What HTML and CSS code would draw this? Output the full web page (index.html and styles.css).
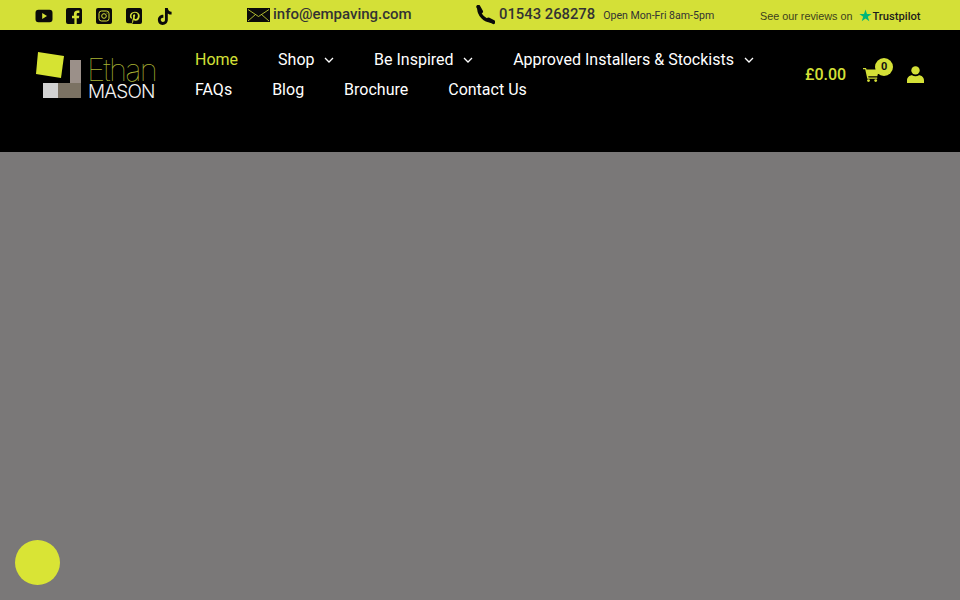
FILE: index.html
```html
<!DOCTYPE html>
<html lang="en">
<head>
    <meta charset="UTF-8">
    <meta name="viewport" content="width=device-width, initial-scale=1.0">
    <title>Ethan Mason</title>
    <link rel="stylesheet" href="styles.css">
</head>
<body>
    <div class="topbar">
        <div class="socials">
            <a href="#" aria-label="YouTube">
                <svg viewBox="0 0 18 18" width="18" height="18"><path fill="#0a0a0a" d="M3.5 2.8h11A3 3 0 0 1 17.500 5.800v6.400a3 3 0 0 1-3 3h-11a3 3 0 0 1-3-3V5.800a3 3 0 0 1 3-3z"/><path fill="#d4e037" d="M7.200 6.100v5.800l4.800-2.900z"/></svg>
            </a>
            <a href="#" aria-label="Facebook">
                <svg viewBox="0 0 16 16" width="16" height="16"><path fill="#0a0a0a" d="M2 0h12a2 2 0 0 1 2 2v12a2 2 0 0 1-2 2h-3.300v-5.700h2.200l.4-2.600h-2.600V6.200c0-.8.4-1.300 1.400-1.300h1.300V2.600c-.6-.1-1.300-.2-2-.2-2.200 0-3.500 1.300-3.500 3.500v1.800H6v2.600h2.400V16H2a2 2 0 0 1-2-2V2a2 2 0 0 1 2-2z"/></svg>
            </a>
            <a href="#" aria-label="Instagram">
                <svg viewBox="0 0 16 16" width="16" height="16"><rect width="16" height="16" rx="2" fill="#0a0a0a"/><rect x="3" y="3" width="10" height="10" rx="2.500" fill="none" stroke="#d4e037" stroke-width="1"/><circle cx="8" cy="8" r="2.300" fill="none" stroke="#d4e037" stroke-width="1"/><circle cx="11" cy="5" r=".6" fill="#d4e037"/></svg>
            </a>
            <a href="#" aria-label="Pinterest">
                <svg viewBox="0 0 16 16" width="16" height="16"><path fill="#0a0a0a" d="M2 0h12a2 2 0 0 1 2 2v12a2 2 0 0 1-2 2H6.200c.4-.7.800-1.500 1-2.300l.5-1.900c.3.500 1 1 1.900 1 2.500 0 4.100-2.200 4.100-4.800 0-2.400-2-4.200-4.800-4.200-3.300 0-5 2.200-5 4.300 0 1.200.5 2.300 1.500 2.700.2.100.3 0 .4-.2l.2-.7c0-.2 0-.3-.1-.4-.3-.4-.5-.9-.5-1.500 0-1.900 1.400-3.300 3.500-3.300 1.900 0 3 1.200 3 2.700 0 2-.9 3.600-2.200 3.600-.7 0-1.300-.6-1.100-1.300.2-.9.600-1.800.6-2.400 0-.6-.3-1-.9-1-.7 0-1.300.7-1.300 1.700 0 .6.200 1.100.2 1.100l-.9 3.600c-.2.800-.1 1.700 0 2.500H2a2 2 0 0 1-2-2V2a2 2 0 0 1 2-2z"/></svg>
            </a>
            <a href="#" aria-label="TikTok">
                <svg viewBox="0 0 18 18" width="17" height="17"><path fill="#0a0a0a" d="M9.500 0h3c.2 2.300 1.600 3.800 4 4v3c-1.500 0-2.900-.5-4-1.300v6.800c0 3-2.400 5.500-5.500 5.500S2 15.500 2 12.500 4.700 7 7.800 7.300v3.100c-1.400-.3-2.800.7-2.800 2.100 0 1.300 1 2.400 2.300 2.400s2.200-1 2.200-2.400z"/></svg>
            </a>
        </div>
        <div class="mail">
            <svg viewBox="0 0 23 14" width="23" height="14"><rect width="23" height="14" fill="#0a0a0a"/><path d="M1 1.500l10.500 7 10.500-7M1 13l7.500-6.500M22 13l-7.500-6.500" fill="none" stroke="#d4e037" stroke-width=".8"/></svg>
            <span class="mail-addr">info@empaving.com</span>
        </div>
        <div class="phone">
            <svg viewBox="0 0 20 20" width="20" height="20"><path d="M4 3.500C3.500 9.500 10 16.500 16.500 16" fill="none" stroke="#0a0a0a" stroke-width="3.400"/><path d="M3.300 1.800L6 6.500M13.500 14.500l4.800 2.600" fill="none" stroke="#0a0a0a" stroke-width="4" stroke-linecap="round"/></svg>
            <span class="phone-num">01543 268278</span>
            <span class="phone-hours">Open Mon-Fri 8am-5pm</span>
        </div>
        <div class="reviews">
            <span>See our reviews on</span>
            <svg viewBox="0 0 14 14" width="13" height="13"><path fill="#00b67a" d="M7 .5l1.600 4.800h5l-4.100 3 1.600 4.900L7 10.200l-4.100 3 1.600-4.900-4.100-3h5z"/></svg>
            <span class="tp-name">Trustpilot</span>
        </div>
    </div>

    <header class="site-header">
        <a href="#" class="logo">
            <svg viewBox="0 0 46 48" width="46" height="48"><path fill="#d6e332" d="M3 1l26 4-3 22-25-4z"/><rect x="35" y="9" width="11" height="23" fill="#9b9089"/><rect x="8" y="32" width="15" height="15" fill="#d2d2d2"/><rect x="23" y="32" width="23" height="15" fill="#7b7263"/></svg>
            <div class="logo-text">
                <span class="logo-top">Ethan</span>
                <span class="logo-bottom">MASON</span>
            </div>
        </a>
        <nav class="menu">
            <a href="#" class="active">Home</a>
            <a href="#">Shop <svg class="caret" viewBox="0 0 10 6" width="10" height="6"><path d="M1 1l4 4 4-4" fill="none" stroke="#fff" stroke-width="1.300"/></svg></a>
            <a href="#">Be Inspired <svg class="caret" viewBox="0 0 10 6" width="10" height="6"><path d="M1 1l4 4 4-4" fill="none" stroke="#fff" stroke-width="1.300"/></svg></a>
            <a href="#">Approved Installers &amp; Stockists <svg class="caret" viewBox="0 0 10 6" width="10" height="6"><path d="M1 1l4 4 4-4" fill="none" stroke="#fff" stroke-width="1.300"/></svg></a>
            <a href="#">FAQs</a>
            <a href="#">Blog</a>
            <a href="#">Brochure</a>
            <a href="#">Contact Us</a>
        </nav>
        <div class="shop-tools">
            <span class="total">£0.00</span>
            <a href="#" class="cart" aria-label="Cart">
                <svg viewBox="0 0 16 14" width="16" height="14"><path fill="#d4e037" d="M0 0h3l.5 1.500H16l-1.700 6.700H5.200l.3 1.300h8.700v1.300H4.300L2.200 1.300H0z"/><circle cx="5.500" cy="12.600" r="1.400" fill="#d4e037"/><circle cx="12.700" cy="12.600" r="1.400" fill="#d4e037"/></svg>
                <span class="badge">0</span>
            </a>
            <a href="#" class="account" aria-label="Account">
                <svg viewBox="0 0 17 17" width="17" height="17"><circle cx="8.500" cy="4.400" r="4.200" fill="#d4e037"/><path fill="#d4e037" d="M0 17v-2.500C0 11.500 2.500 9.300 5 9.300c1 .6 2.200 1 3.500 1s2.500-.4 3.500-1c2.500 0 5 2.200 5 5.200V17z"/></svg>
            </a>
        </div>
    </header>

    <main class="hero"></main>

    <button class="chat-bubble" aria-label="Chat"></button>
</body>
</html>
```

FILE: styles.css
```css
* {
    margin: 0;
    padding: 0;
    box-sizing: border-box;
}

body {
    font-family: Roboto, Arial, sans-serif;
    background: #7a7878;
    height: 600px;
    overflow: hidden;
    display: flex;
    flex-direction: column;
}

a {
    text-decoration: none;
    color: inherit;
}

.topbar {
    height: 30px;
    background: #d4e037;
    display: flex;
    align-items: center;
    color: #333;
    flex-shrink: 0;
}

.socials {
    display: flex;
    align-items: center;
    gap: 14px;
    margin: 2px 0 0 35px;
    width: 212px;
}

.socials a {
    display: flex;
}

.socials a:first-child {
    margin-right: -1px;
}

.mail {
    display: flex;
    align-items: center;
    gap: 3px;
    font-size: 15px;
    font-weight: 500;
    width: 228px;
}

.mail-addr {
    margin-bottom: 2px;
}

.phone {
    display: flex;
    align-items: center;
    width: 285px;
}

.phone-num {
    font-size: 14.8px;
    font-weight: 500;
    margin: 0 0 2px 4px;
}

.phone-hours {
    font-size: 10.6px;
    margin-left: 8px;
}

.reviews {
    display: flex;
    align-items: center;
    margin-top: 2px;
    font-family: Arial, "Liberation Sans", sans-serif;
    font-size: 10.8px;
    color: #3c3f1c;
}

.reviews svg {
    margin: -2px 0 0 7px;
}

.tp-name {
    color: #1c1c1c;
    font-size: 11.200px;
    font-weight: 500;
    font-family: Roboto, Arial, sans-serif;
}

.site-header {
    height: 122px;
    background: #000;
    display: flex;
    align-items: flex-start;
    flex-shrink: 0;
}

.logo {
    display: flex;
    margin: 21px 0 0 35px;
    width: 160px;
}

.logo-text {
    display: flex;
    flex-direction: column;
    margin-left: 7px;
}

.logo-top {
    font-size: 31px;
    font-family: Inter, sans-serif;
    font-weight: 100;
    line-height: 26px;
    color: #a9b334;
    margin: 6px 0 0 -1px;
    letter-spacing: -1.800px;
}

.logo-bottom {
    font-size: 19px;
    font-family: Inter, sans-serif;
    font-weight: 300;
    line-height: 15px;
    color: #f2f2f2;
    margin-top: 1px;
    letter-spacing: -.8px;
}

.menu {
    display: flex;
    flex-wrap: wrap;
    width: 590px;
    column-gap: 40px;
    margin-top: 15px;
    font-size: 16px;
    line-height: 30px;
    color: #fff;
}

.menu a {
    white-space: nowrap;
}

.menu .active {
    color: #d4e037;
}

.caret {
    margin-left: 5.600px;
    vertical-align: 2px;
}

.shop-tools {
    display: flex;
    align-items: center;
    margin: 35px 0 0 20px;
    color: #d4e037;
}

.total {
    font-size: 16px;
    font-weight: 500;
}

.cart {
    position: relative;
    display: flex;
    margin-left: 17px;
}

.badge {
    position: absolute;
    top: -10px;
    left: 12px;
    width: 18px;
    height: 18px;
    border-radius: 50%;
    background: #d4e037;
    color: #111;
    font-size: 11px;
    font-weight: 700;
    line-height: 18px;
    text-align: center;
}

.account {
    display: flex;
    margin-left: 28px;
}

.hero {
    flex: 1;
}

.chat-bubble {
    position: fixed;
    left: 15px;
    bottom: 15px;
    width: 45px;
    height: 45px;
    border: none;
    border-radius: 50%;
    background: #d9e435;
}
```
